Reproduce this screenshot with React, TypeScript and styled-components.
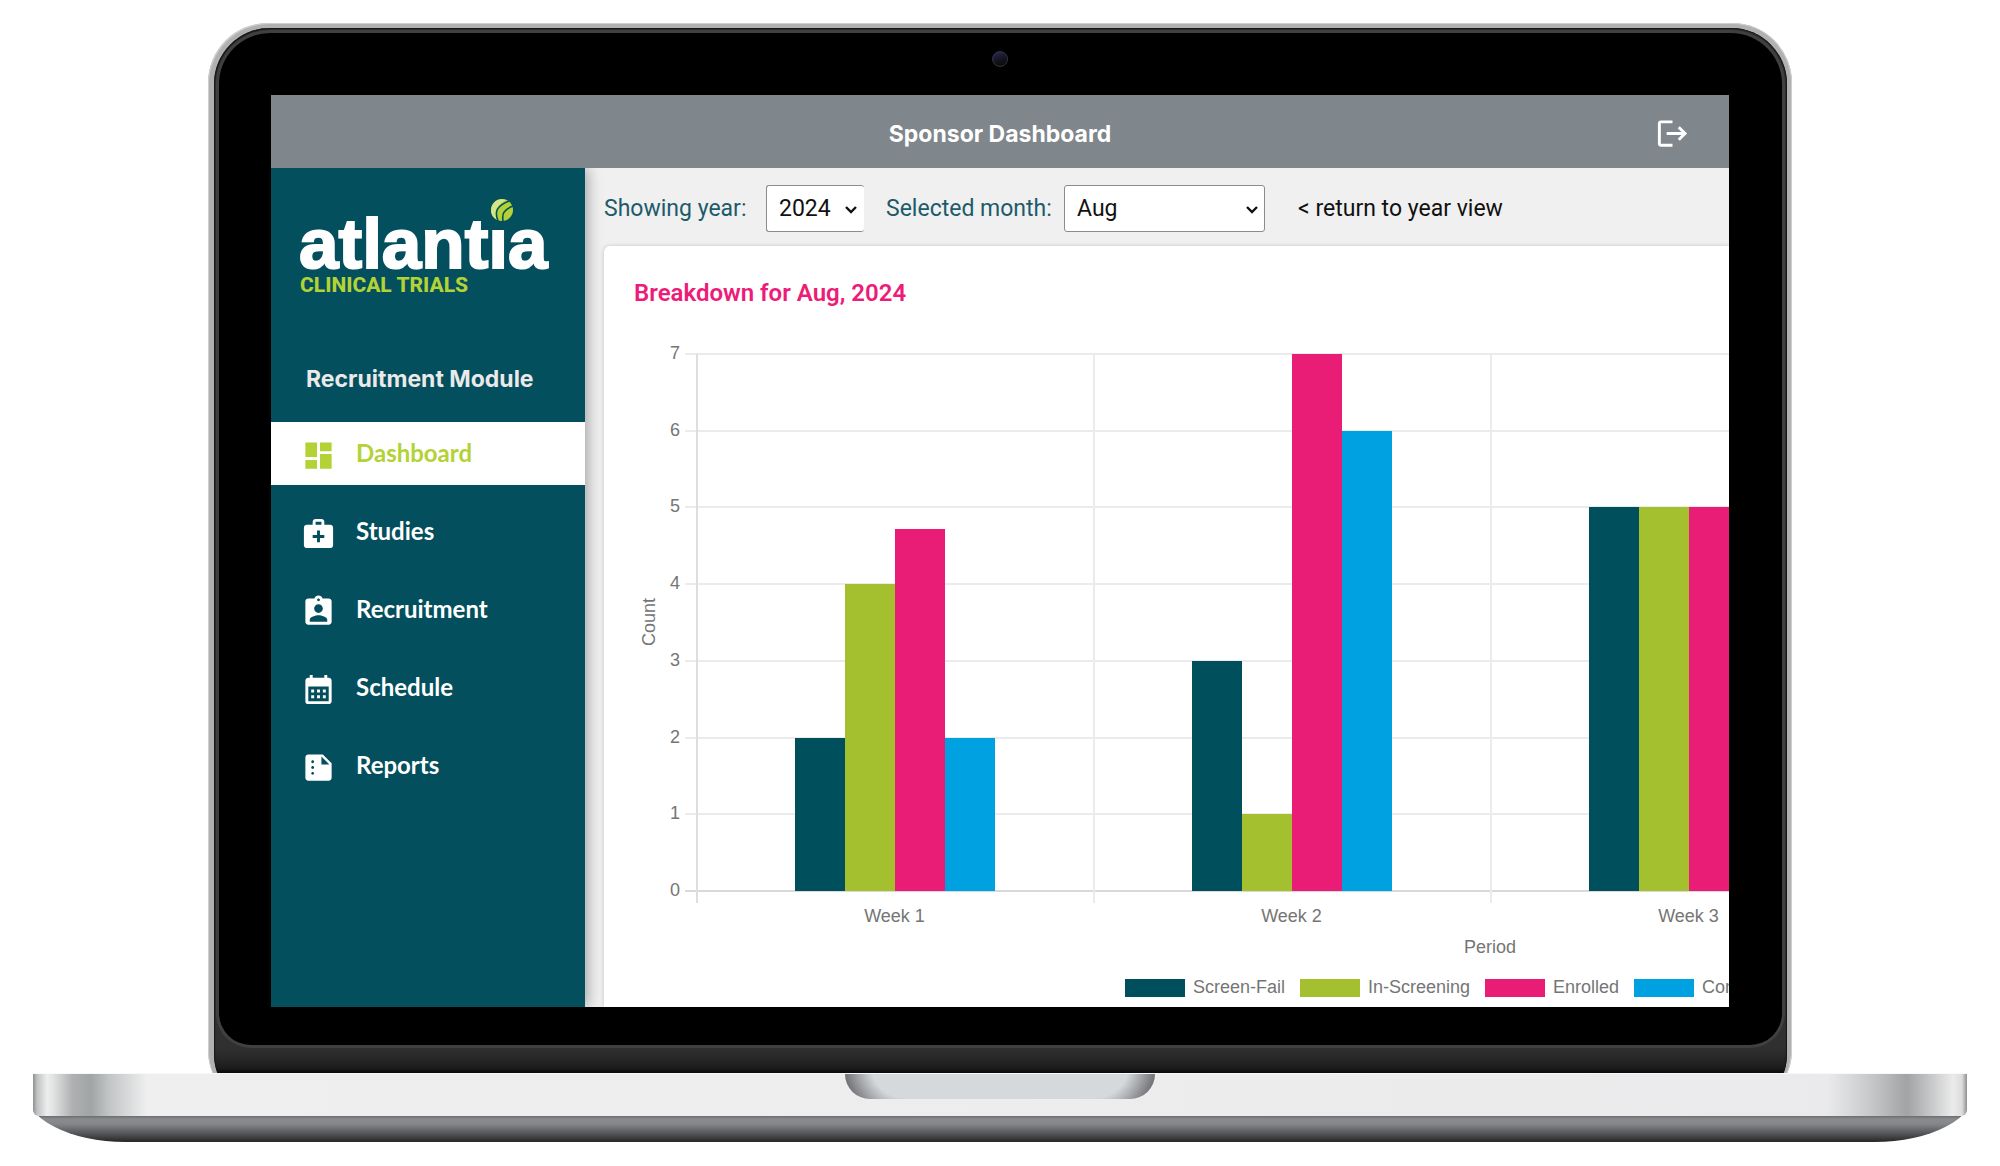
import React from 'react';
import styled, { createGlobalStyle } from 'styled-components';
import {
  MdAssignmentInd,
  MdCalendarMonth,
  MdDashboard,
  MdLogout,
  MdMedicalServices,
  MdSummarize,
} from 'react-icons/md';

const teal = '#044f5d';
const lime = '#b2d235';
const pink = '#ec1c78';

const GlobalStyle = createGlobalStyle`
  *, *::before, *::after { box-sizing: border-box; }
  body { margin: 0; background: #fff; font-family: Roboto, sans-serif; }
  h1, h2, p, ul { margin: 0; padding: 0; }
  ul { list-style: none; }
`;

/* ---------- laptop ---------- */

const Page = styled.div`
  display: flex;
  flex-direction: column;
  padding: 23px 33px 24px;
`;

const Lid = styled.div`
  margin: 0 175px -37px;
  padding: 5px 5px 0 6px;
  border-radius: 60px;
  background: #b1b1b1;
  box-shadow: inset 1px 1px 0 #cfcfcf, inset -1px 0 0 #cfcfcf;
`;

const Chin = styled.div`
  padding: 5px 5px 65px;
  border-radius: 56px;
  background: linear-gradient(to top, #0a0a0a 37px, #1c1c1c 42px, #2a2a2a 54px, #303030 62px);
  box-shadow: inset 1px 1px 1px #161616, inset -1px 0 1px #161616;
`;

const Bezel = styled.div`
  display: flex;
  flex-direction: column;
  padding: 0 53px 38px 52px;
  border-radius: 51px 51px 32px 32px;
  background: #000;
  box-shadow: 0 0 0 3px #404040;
`;

const CameraRow = styled.div`
  display: flex;
  align-items: center;
  justify-content: center;
  height: 62px;
`;

const Camera = styled.span`
  width: 16px;
  height: 16px;
  margin-bottom: 10px;
  border: 1px solid #35353f;
  border-radius: 50%;
  background: linear-gradient(160deg, #2b2858, #121218 60%, #08080c);
`;

const Base = styled.div`
  position: relative;
  display: flex;
  flex-direction: column;
`;

const Deck = styled.div`
  display: flex;
  justify-content: center;
  align-items: flex-start;
  height: 43px;
  border-top: 1px solid #f8f8f8;
  border-radius: 0 0 6px 6px;
  background: linear-gradient(
    to right,
    #8e8f90 0,
    #c0c1c2 4px,
    #ededed 14px,
    #e2e3e3 20px,
    #aeafb0 40px,
    #a1a5a6 58px,
    #c2c4c5 76px,
    #d9dadb 96px,
    #efefef 114px,
    #ededed 50%,
    #eaeaec calc(100% - 140px),
    #d9dadb calc(100% - 118px),
    #c2c4c5 calc(100% - 92px),
    #a1a3a4 calc(100% - 60px),
    #c4c5c6 calc(100% - 38px),
    #ebebeb calc(100% - 14px),
    #dcdcdc calc(100% - 5px),
    #8e8f90 100%
  );
`;

const Notch = styled.div`
  width: 310px;
  height: 25px;
  border-radius: 0 0 26px 26px;
  background:
    radial-gradient(circle at 60px -10px, #d5d9dc 34px, #66676b 64px) left / 60px 100% no-repeat,
    radial-gradient(circle at 0 -10px, #d5d9dc 34px, #66676b 64px) right / 60px 100% no-repeat,
    #d5d9dc;
`;

/* Only the lower half of the rounded shape shows below the deck. */
const Underside = styled.div`
  height: 52px;
  margin: -26px -8px 0;
  border-radius: 0 0 100px 100px / 0 0 52px 52px;
  background: linear-gradient(#6b6c70 26px, #8a8b8f 29px, #85868a 34px, #5c5d60 42px, #2b2c2d 51px);
  clip-path: inset(26px 0 0 0);
`;

/* ---------- application ---------- */

const Screen = styled.div`
  display: flex;
  flex-direction: column;
  overflow: hidden;
  background: #f0f0f0;
`;

const TopBar = styled.header`
  position: relative;
  z-index: 2;
  display: grid;
  grid-template-columns: 1fr auto 1fr;
  align-items: center;
  height: 73px;
  padding: 0 39px;
  background: #7f868c;
  color: #fff;
`;

const Title = styled.h1`
  grid-column: 2;
  padding-top: 4px;
  font: 700 23px/32px Inter, sans-serif;
`;

const LogoutButton = styled.button`
  display: flex;
  justify-self: end;
  padding: 4px 0 0;
  border: 0;
  background: none;
  color: #fff;
  font-size: 35px;
`;

const Workspace = styled.div`
  display: flex;
`;

const Sidebar = styled.aside`
  z-index: 1;
  flex: none;
  width: 314px;
  padding-top: 28px;
  background: ${teal};
  box-shadow: 2px 0 14px rgba(0, 0, 0, 0.35);
`;

const Logo = styled.svg`
  display: block;
  margin-left: 28px;
`;

const ModuleName = styled.h2`
  padding: 61px 0 27px 35px;
  color: #eaeaea;
  font: 700 23px/32px Inter, sans-serif;
`;

const NavList = styled.ul`
  display: flex;
  flex-direction: column;
  gap: 15px;
`;

const NavLink = styled.a<{ $active?: boolean }>`
  display: flex;
  align-items: center;
  gap: 20px;
  height: 63px;
  padding: 0 0 2px 30px;
  background: ${(p) => (p.$active ? '#fff' : 'transparent')};
  color: ${(p) => (p.$active ? lime : '#fff')};
  font: 700 24px/30px Lato, sans-serif;
  text-decoration: none;

  svg {
    flex: none;
    margin-top: 6px;
    font-size: 35px;
  }
`;

const Main = styled.main`
  flex: 1;
  min-width: 0;
  padding-left: 19px;
`;

const Toolbar = styled.div`
  display: flex;
  align-items: center;
  height: 78px;
  padding-top: 3px;
  font-size: 23px;
  line-height: 30px;
`;

const Field = styled.div<{ $gap: number; $labelWidth: number }>`
  display: flex;
  align-items: center;
  margin-right: ${(p) => p.$gap}px;

  label {
    width: ${(p) => p.$labelWidth}px;
    color: #1d5b6b;
  }
`;

const SelectBox = styled.div<{ $width: number; $openEnd?: boolean }>`
  position: relative;
  width: ${(p) => p.$width}px;

  select {
    appearance: none;
    width: 100%;
    height: 47px;
    padding: 0 12px;
    border: 1px solid #8c8c8c;
    border-right-width: ${(p) => (p.$openEnd ? 0 : 1)}px;
    border-radius: 3px;
    background: #fff;
    color: #111;
    font: 400 23px/30px Roboto, sans-serif;
  }

  svg {
    position: absolute;
    right: 6px;
    top: 20px;
    pointer-events: none;
  }
`;

const ReturnLink = styled.a`
  color: #111;
  text-decoration: none;
`;

const Card = styled.section`
  padding: 33px 0 0 30px;
  border-radius: 6px 0 0 0;
  background: #fff;
  box-shadow: 0 0 4px rgba(0, 0, 0, 0.18);
`;

const CardTitle = styled.h2`
  color: ${pink};
  font: 600 24px/28px Roboto, sans-serif;
`;

const ChartSvg = styled.svg`
  display: block;

  text {
    fill: #757575;
    font: 400 18px 'Liberation Sans', sans-serif;
  }
`;

/* ---------- data ---------- */

const navItems = [
  { label: 'Dashboard', icon: MdDashboard, active: true },
  { label: 'Studies', icon: MdMedicalServices },
  { label: 'Recruitment', icon: MdAssignmentInd },
  { label: 'Schedule', icon: MdCalendarMonth },
  { label: 'Reports', icon: MdSummarize },
];

const seriesColors = ['#004f5c', '#a4c02f', '#ea1d76', '#00a1e1'];

const weeks = [
  { label: 'Week 1', counts: [2, 4, 4.72, 2] },
  { label: 'Week 2', counts: [3, 1, 7, 6] },
  { label: 'Week 3', counts: [5, 5, 5] },
];

const legend = [
  { label: 'Screen-Fail', x: 491 },
  { label: 'In-Screening', x: 666 },
  { label: 'Enrolled', x: 851 },
  { label: 'Completed', x: 1000 },
];

const plot = { left: 62, top: 47, bottom: 584, week: 397, bar: 50, max: 7, weeks: 4 };
const yFor = (count: number) =>
  Math.round(plot.bottom - (count * (plot.bottom - plot.top)) / plot.max);

/* ---------- parts ---------- */

const Chevron = () => (
  <svg width="14" height="10" viewBox="0 0 14 10" aria-hidden="true">
    <path d="M2 2l5 5 5-5" fill="none" stroke="#111" strokeWidth="2.4" />
  </svg>
);

const AtlantiaLogo = () => (
  <Logo width="260" height="106" viewBox="0 0 260 106" role="img" aria-label="atlantia clinical trials">
    <text
      x="0"
      y="72"
      fill="#fff"
      stroke="#fff"
      strokeWidth="2"
      fontFamily="'Liberation Sans', sans-serif"
      fontWeight="700"
      fontSize="71"
    >
      atlantıa
    </text>
    <circle cx="203" cy="14" r="11" fill={lime} />
    <path d="M192 14a11 11 0 0 1 15-10c-7 4-12 9-9 20a11 11 0 0 1-6-10z" fill="#d3e588" />
    <path d="M210 5c-12 5-15 10-11 20M214 10c-10 4-11 8-10 15" fill="none" stroke={teal} strokeWidth="1.6" />
    <text x="1" y="96" fill={lime} fontFamily="Roboto, sans-serif" fontWeight="800" fontSize="21">
      CLINICAL TRIALS
    </text>
  </Logo>
);

const BreakdownChart = () => {
  const right = plot.left + plot.week * plot.weeks;
  const counts = Array.from({ length: plot.max + 1 }, (_, i) => i);
  const edges = Array.from({ length: plot.weeks + 1 }, (_, i) => plot.left + i * plot.week);
  return (
    <ChartSvg width="1680" height="700" viewBox="0 0 1680 700" role="img" aria-label="Count per week by status">
      {counts.map((c) => (
        <g key={c}>
          <rect x={plot.left - 11} y={yFor(c) - 1} width={right - plot.left + 11} height="2" fill={c ? '#ebebeb' : '#d9d9d9'} />
          <text x={plot.left - 16} y={yFor(c) + 5} textAnchor="end">{c}</text>
        </g>
      ))}
      {edges.map((x, i) => (
        <rect key={x} x={x} y={plot.top} width="2" height={plot.bottom - plot.top + 12} fill={i ? '#ebebeb' : '#dedede'} />
      ))}
      {weeks.map((w, wi) => {
        const start = plot.left + wi * plot.week;
        return (
          <g key={w.label}>
            {w.counts.map((c, si) => (
              <rect
                key={si}
                x={start + 99 + si * plot.bar}
                y={yFor(c)}
                width={plot.bar}
                height={plot.bottom - yFor(c)}
                fill={seriesColors[si]}
              />
            ))}
            <text x={start + plot.week / 2} y="615" textAnchor="middle">{w.label}</text>
          </g>
        );
      })}
      <text x={(plot.left + right) / 2} y="646" textAnchor="middle">Period</text>
      <text transform="translate(21 315) rotate(-90)" textAnchor="middle">Count</text>
      {legend.map((item, i) => (
        <g key={item.label}>
          <rect x={item.x} y="672" width="60" height="18" fill={seriesColors[i]} />
          <text x={item.x + 68} y="686">{item.label}</text>
        </g>
      ))}
    </ChartSvg>
  );
};

export default function App() {
  return (
    <>
      <GlobalStyle />
      <Page>
        <Lid>
          <Chin>
            <Bezel>
              <CameraRow>
                <Camera />
              </CameraRow>
              <Screen>
                <TopBar>
                  <Title>Sponsor Dashboard</Title>
                  <LogoutButton type="button" aria-label="Log out">
                    <MdLogout />
                  </LogoutButton>
                </TopBar>
                <Workspace>
                  <Sidebar>
                    <AtlantiaLogo />
                    <ModuleName>Recruitment Module</ModuleName>
                    <nav>
                      <NavList>
                        {navItems.map(({ label, icon: Icon, active }) => (
                          <li key={label}>
                            <NavLink href="#" $active={active}>
                              <Icon />
                              {label}
                            </NavLink>
                          </li>
                        ))}
                      </NavList>
                    </nav>
                  </Sidebar>
                  <Main>
                    <Toolbar>
                      <Field $gap={22} $labelWidth={162}>
                        <label htmlFor="year">Showing year:</label>
                        <SelectBox $width={98} $openEnd>
                          <select id="year" defaultValue="2024">
                            <option>2024</option>
                          </select>
                          <Chevron />
                        </SelectBox>
                      </Field>
                      <Field $gap={33} $labelWidth={178}>
                        <label htmlFor="month">Selected month:</label>
                        <SelectBox $width={201}>
                          <select id="month" defaultValue="Aug">
                            <option>Aug</option>
                          </select>
                          <Chevron />
                        </SelectBox>
                      </Field>
                      <ReturnLink href="#">&lt; return to year view</ReturnLink>
                    </Toolbar>
                    <Card>
                      <CardTitle>Breakdown for Aug, 2024</CardTitle>
                      <BreakdownChart />
                    </Card>
                  </Main>
                </Workspace>
              </Screen>
            </Bezel>
          </Chin>
        </Lid>
        <Base>
          <Deck>
            <Notch />
          </Deck>
          <Underside />
        </Base>
      </Page>
    </>
  );
}
